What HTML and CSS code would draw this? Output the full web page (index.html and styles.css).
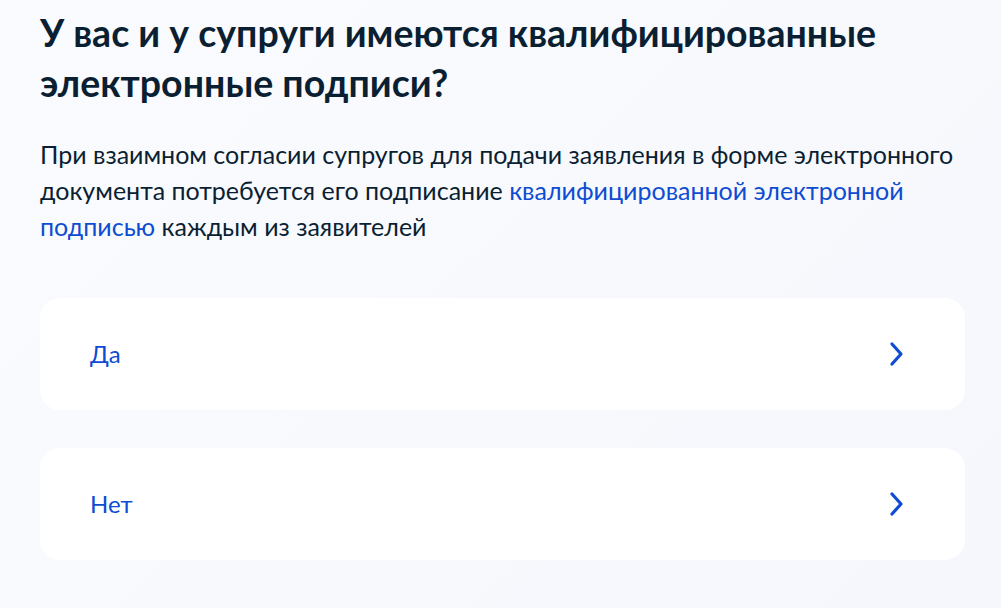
FILE: index.html
```html
<!DOCTYPE html>
<html lang="ru">
<head>
<meta charset="utf-8">
<link rel="stylesheet" href="styles.css">
</head>
<body>
<main class="page">
  <h1 class="title">У вас и у супруги имеются квалифицированные электронные подписи?</h1>
  <p class="lead">При взаимном согласии супругов для подачи заявления в форме электронного документа потребуется его подписание <a class="link" href="#">квалифицированной электронной подписью</a> каждым из заявителей</p>
  <div class="options">
    <a class="option" href="#">
      <span class="option-label">Да</span>
      <svg class="chev" width="16" height="26" viewBox="0 0 16 26"><path d="M3 3 L12 13 L3 23" fill="none" stroke="#0d4cd3" stroke-width="3.2" stroke-linecap="round" stroke-linejoin="round"/></svg>
    </a>
    <a class="option" href="#">
      <span class="option-label">Нет</span>
      <svg class="chev" width="16" height="26" viewBox="0 0 16 26"><path d="M3 3 L12 13 L3 23" fill="none" stroke="#0d4cd3" stroke-width="3.2" stroke-linecap="round" stroke-linejoin="round"/></svg>
    </a>
  </div>
</main>
</body>
</html>
```
FILE: styles.css
```css
html, body {
  margin: 0;
  padding: 0;
}
body {
  background: linear-gradient(135deg, #fafbfe 0%, #f5f7fc 100%);
  font-family: Lato, "Liberation Sans", sans-serif;
  color: #0b1f33;
  min-height: 608px;
}
.page {
  padding: 8px 36px 0 40px;
}
.title {
  margin: 0;
  font-size: 37.5px;
  line-height: 50px;
  font-weight: 700;
  max-width: 900px;
}
.lead {
  margin: 28px 0 0;
  font-size: 25px;
  line-height: 36px;
  max-width: 925px;
}
.link {
  color: #0d4cd3;
  text-decoration: none;
}
.options {
  margin-top: 54px;
  display: flex;
  flex-direction: column;
  gap: 38px;
}
.option {
  display: flex;
  align-items: center;
  justify-content: space-between;
  height: 112px;
  box-sizing: border-box;
  padding: 0 60px 0 50px;
  background: #fff;
  border-radius: 20px;
  text-decoration: none;
  width: 925px;
}
.option-label {
  color: #0d4cd3;
  font-size: 24px;
  line-height: 32px;
}
.chev {
  display: block;
}
```
